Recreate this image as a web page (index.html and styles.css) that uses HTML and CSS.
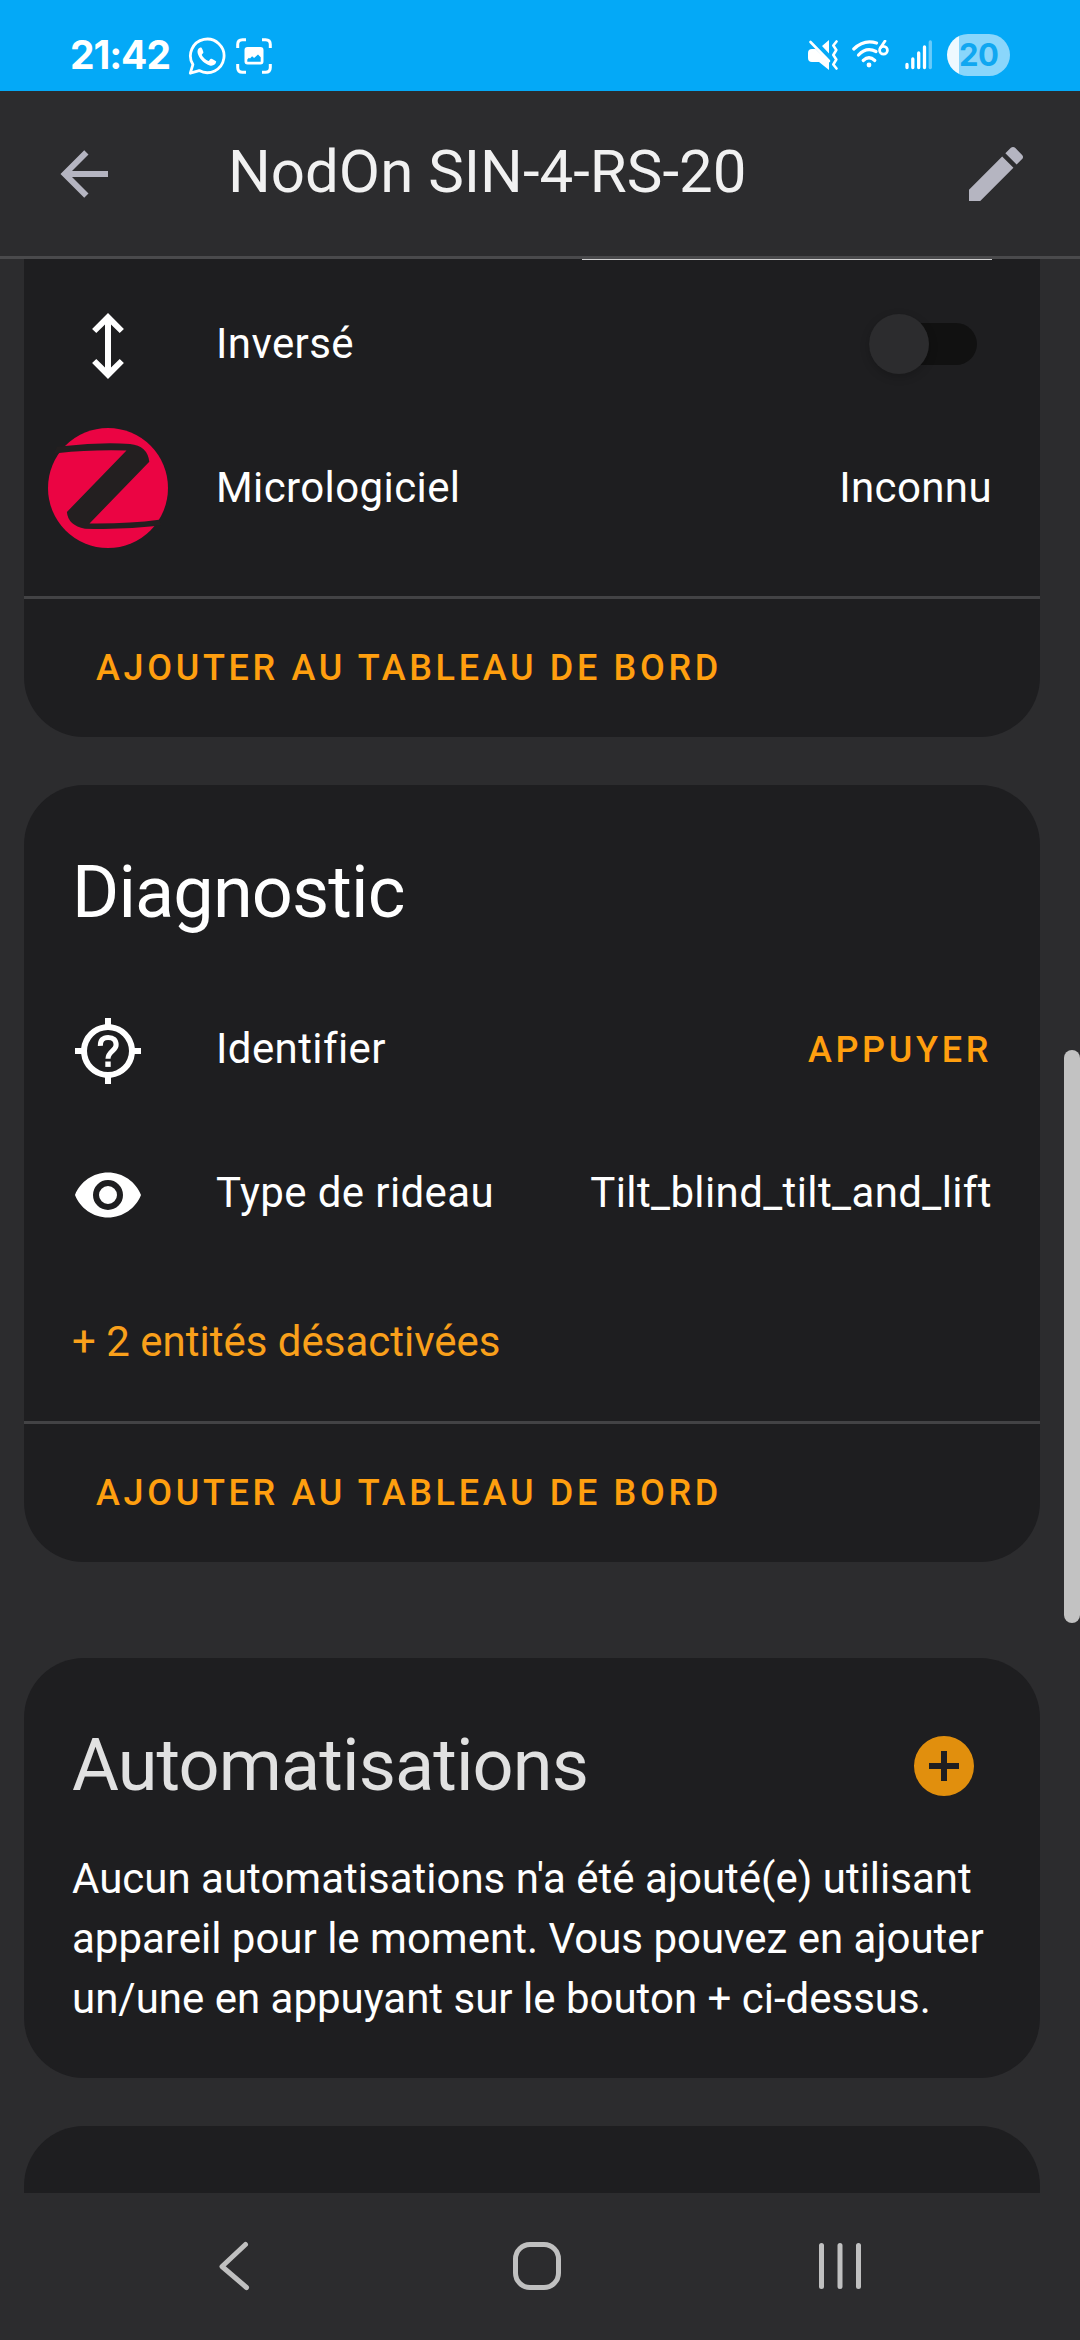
FILE: index.html
```html
<!DOCTYPE html>
<html lang="fr">
<head>
<meta charset="utf-8">
<title>NodOn SIN-4-RS-20</title>
<link rel="stylesheet" href="styles.css">
</head>
<body>
<div class="status">
  <span class="clock">21:42</span>
  <svg class="st-whatsapp" width="38" height="38" viewBox="0 0 38 38"><path d="M2.3 36.2 4.9 27.6A16.8 16.8 0 1 1 11.2 33.6Z" fill="none" stroke="#fff" stroke-width="2.8" stroke-linejoin="round"/><path d="M12.2 10.6c-2.6 1-3.4 4-2 7.200 2.200 5.200 6.500 9.100 11.600 10.700 3 .9 6.200-1 6.400-3.900.1-.8-4.600-3.100-5.400-2.900-.9.3-1.600 2.300-2.400 2.200-2.700-.7-5.500-3.300-6.600-5.800-.2-.7 1.500-1.600 1.600-2.500.1-.8-1.500-4.700-2.200-5-.3-.1-.6-.1-1 0z" fill="#fff"/></svg>
  <svg class="st-shot" width="36" height="36" viewBox="0 0 36 36"><path d="M1.700 10V6.500Q1.700 1.700 6.500 1.700H10M26 1.700h3.500Q34.300 1.700 34.300 6.500V10M34.300 26v3.500Q34.300 34.300 29.500 34.300H26M10 34.300H6.500Q1.700 34.300 1.700 29.500V26" fill="none" stroke="#fff" stroke-width="3"/><path fill-rule="evenodd" d="M11.500 9h13Q27.500 9 27.500 12v11.500q0 3-3 3h-13q-3 0-3-3V12q0-3 3-3zM11.300 23.800h13.400v-4.500l-2.700-2.800-3.900 3.500-2-1.700-2.100 2.300-1.100-.8-1.600 1.700z" fill="#fff"/></svg>
  <div class="status-right">
    <svg width="30" height="30" viewBox="0 0 30 30"><path d="M0 13q0-4 4-4h3.500L21 22v8l-10-8H4q-4 0-4-4zM21 0v13.500l-7-7.500z" fill="#fff"/><path d="M2.500 2 21 21" stroke="#fff" stroke-width="2.600" stroke-linecap="round"/><path d="M28.500 1.500 25.300 5.500 28.300 10 25.300 15 28.300 19.500 25.300 24.500 28.500 28.500" fill="none" stroke="#fff" stroke-width="2.600" stroke-linecap="round" stroke-linejoin="round"/></svg>
    <svg class="st-wifi" width="38" height="30" viewBox="0 0 38 30"><g fill="none" stroke="#fff" stroke-width="3.200" stroke-linecap="round"><path d="M1.800 9Q12 -1 24.500 3"/><path d="M6.500 15Q14.500 6.500 24 11.500"/><path d="M11.200 20.500q5.800-5.500 11.600 0"/></g><circle cx="17" cy="25" r="2.400" fill="#fff"/><circle cx="31.500" cy="10.300" r="3.900" fill="none" stroke="#fff" stroke-width="2.800"/><path d="M28.300 8 33 1" stroke="#fff" stroke-width="2.800" stroke-linecap="round"/></svg>
    <svg class="st-signal" width="28" height="30" viewBox="0 0 28 30"><g stroke="#fff" stroke-width="3.300" stroke-linecap="round"><path d="M2 24.500V27.600M7.800 19V27.600M13.700 13V27.600M19.500 7V27.600"/><path d="M25.300 2V27.600" opacity=".4"/></g></svg>
    <span class="battery">20</span>
  </div>
</div>

<header class="toolbar">
  <svg class="icon" viewBox="0 0 24 24"><path d="M20 11v2H8l5.500 5.500-1.420 1.420L4.160 12l7.920-7.920L13.500 5.500 8 11z"/></svg>
  <h1>NodOn SIN-4-RS-20</h1>
  <svg class="icon" viewBox="0 0 24 24"><path d="M20.710 7.040c.39-.39.39-1.040 0-1.410l-2.340-2.340c-.37-.39-1.020-.39-1.410 0l-1.840 1.830 3.750 3.750M3 17.250V21h3.750L17.810 9.930l-3.750-3.750z"/></svg>
</header>

<main class="content">
  <section class="card first">
    <div class="select-line"></div>
    <div class="rows">
      <div class="row">
        <span class="badge"><svg class="icon" viewBox="0 0 24 24"><path d="M12 1 17.300 6.300 15.900 7.700 13 4.830V19.170L15.900 16.300 17.300 17.700 12 23 6.700 17.700 8.100 16.300 11 19.170V4.830L8.100 7.700 6.700 6.300z"/></svg></span>
        <span class="name">Inversé</span>
        <span class="switch"><span class="knob"></span></span>
      </div>
      <div class="row">
        <svg class="zigbee" viewBox="0 0 120 120"><circle cx="60" cy="60" r="60" fill="#eb0443"/><path class="zig" d="M9 18.800 17 18Q50 14.200 82 15.900Q99.500 17.500 101.300 33.700L41.500 95.500Q80 96 111 91.800L113 97 105 98.300Q70 102.200 37 100.700Q20 97.500 18.900 84L78.500 22.400Q40 21.500 11 25L6 25.600z"/></svg>
        <span class="name">Micrologiciel</span>
        <span class="value">Inconnu</span>
      </div>
    </div>
    <div class="actions"><a>AJOUTER AU TABLEAU DE BORD</a></div>
  </section>

  <section class="card diagnostic">
    <h2>Diagnostic</h2>
    <div class="rows">
      <div class="row">
        <span class="badge"><svg class="icon" viewBox="0 0 24 24"><path d="M11 1h2v2.060A9 9 0 0 1 20.940 11H23v2h-2.060A9 9 0 0 1 13 20.940V23h-2v-2.060A9 9 0 0 1 3.060 13H1v-2h2.060A9 9 0 0 1 11 3.060zM12 5a7 7 0 1 0 0 14 7 7 0 0 0 0-14z" fill-rule="evenodd"/><path d="M9.450 10.300Q9.400 7.500 12.050 7.500T14.700 10C14.700 11.900 12 12.100 12 14.600" fill="none" stroke="#fff" stroke-width="1.700"/><path d="M11.100 15.500h1.800v1.800h-1.800z"/></svg></span>
        <span class="name">Identifier</span>
        <a class="press">APPUYER</a>
      </div>
      <div class="row">
        <span class="badge"><svg class="icon" viewBox="0 0 24 24"><path d="M12 9a3 3 0 0 0-3 3 3 3 0 0 0 3 3 3 3 0 0 0 3-3 3 3 0 0 0-3-3m0 8a5 5 0 0 1-5-5 5 5 0 0 1 5-5 5 5 0 0 1 5 5 5 5 0 0 1-5 5m0-12.500C7 4.500 2.730 7.610 1 12c1.730 4.390 6 7.500 11 7.500s9.270-3.110 11-7.500c-1.730-4.390-6-7.500-11-7.500z"/></svg></span>
        <span class="name">Type de rideau</span>
        <span class="value">Tilt_blind_tilt_and_lift</span>
      </div>
    </div>
    <a class="more">+ 2 entités désactivées</a>
    <div class="actions"><a>AJOUTER AU TABLEAU DE BORD</a></div>
  </section>

  <section class="card automations">
    <div class="heading">
      <h2>Automatisations</h2>
      <svg class="icon add" viewBox="0 0 24 24"><path d="M17 13h-4v4h-2v-4H7v-2h4V7h2v4h4m-5-9A10 10 0 0 0 2 12a10 10 0 0 0 10 10 10 10 0 0 0 10-10A10 10 0 0 0 12 2z"/></svg>
    </div>
    <p>Aucun automatisations n'a été ajouté(e) utilisant appareil pour le moment. Vous pouvez en ajouter un/une en appuyant sur le bouton + ci-dessus.</p>
  </section>

  <section class="card next"></section>
</main>

<nav class="navbar">
  <svg width="32" height="50" viewBox="0 0 32 50"><path d="M27.500 3.500 4 25.500 28.500 46.500" /></svg>
  <svg width="50" height="50" viewBox="0 0 50 50"><rect x="3.500" y="3.500" width="43" height="43" rx="14.500"/></svg>
  <svg width="44" height="50" viewBox="0 0 44 50"><path d="M3.500 4.500V45.500M22 4.500V45.500M40.500 4.500V45.500"/></svg>
</nav>
<div class="scrollbar"></div>
</body>
</html>
```
FILE: styles.css
```css
* { box-sizing: border-box; }

body {
  margin: 0;
  width: 1080px;
  height: 2340px;
  display: flex;
  flex-direction: column;
  overflow: hidden;
  position: relative;
  background: #2c2c2e;
  color: #fff;
  font: 42px/60px Roboto, "Noto Sans", sans-serif;
}

h1, h2, p { margin: 0; font-weight: 400; }
svg { display: block; flex: none; }
.icon { width: 72px; height: 72px; fill: currentColor; }

.status {
  height: 91px;
  flex: none;
  display: flex;
  align-items: flex-start;
  padding: 34px 70px 0 70px;
  background: #04a9f7;
}
.clock {
  width: 118px;
  font: 700 39px/42px Inter, sans-serif;
  letter-spacing: -1.1px;
}
.st-whatsapp { margin-top: 3px; }
.st-shot { margin: 4px 0 0 10px; }
.status-right { margin-left: auto; display: flex; }
.status-right svg { margin-top: 6px; }
.status-right .st-wifi { margin-left: 14px; }
.status-right .st-signal { margin-left: 15px; }
.battery {
  width: 63px;
  height: 42px;
  margin-left: 14px;
  border-radius: 21px;
  background: linear-gradient(90deg, #eef9ff 12px, #8ad6fb 12px);
  color: #10a7f1;
  font: 700 31px/41px Inter, sans-serif;
  letter-spacing: -0.6px;
  padding-left: 12px;
}

.toolbar {
  height: 168px;
  flex: none;
  display: flex;
  align-items: center;
  padding: 0 48px;
  border-bottom: 3px solid #4a4a4c;
  color: #b5b5c1;
}
.toolbar h1 {
  margin-left: 108px;
  flex: 1;
  padding-bottom: 4px;
  font-size: 60px;
  line-height: 72px;
  color: #f1f1f1;
}

.content {
  flex: 1;
  min-height: 0;
  overflow: hidden;
  padding: 0 40px 0 24px;
}
.card {
  border-radius: 60px;
  background: #1e1e20;
  overflow: hidden;
}
.card.first { border-radius: 0 0 60px 60px; }
.select-line { height: 1px; width: 410px; margin: 0 48px 24px auto; background: #d0d0d0; }
.rows { display: flex; flex-direction: column; gap: 24px; padding: 0 48px 0 24px; }
.row { height: 120px; display: flex; align-items: center; letter-spacing: .009375em; }
.badge { width: 120px; display: flex; justify-content: center; padding-top: 4px; }
.name { margin-left: 48px; flex: 1; }
.zigbee { width: 120px; height: 120px; }
.zig { fill: #231f20; }

.switch {
  width: 108px;
  height: 42px;
  margin-right: 15px;
  border-radius: 21px;
  background: #111;
  display: flex;
  align-items: center;
}
.knob {
  width: 60px;
  height: 60px;
  border-radius: 50%;
  background: #2c2c2e;
  box-shadow: 0 3px 10px rgba(0, 0, 0, .2);
}

.actions {
  height: 141px;
  border-top: 3px solid #434345;
  display: flex;
  align-items: center;
  padding: 0 72px;
}
.actions a, .press {
  color: #ff9f0f;
  font-weight: 500;
  font-size: 36px;
  letter-spacing: 3.67px;
}
.press { padding-top: 2px; }
.first .actions { margin-top: 48px; }

.diagnostic { margin-top: 48px; }
.card h2 {
  font-size: 72px;
  line-height: 144px;
  letter-spacing: -0.86px;
}
.diagnostic h2 { padding: 36px 48px 0; margin-bottom: 24px; }
.more { display: block; margin: 59px 48px 49px; color: #f9a01b; }

.automations { margin-top: 96px; height: 420px; padding: 36px 48px 0; }
.heading {
  display: flex;
  justify-content: space-between;
  align-items: center;
  padding-right: 12px;
  color: #e1e1e1;
}
.add { color: #e18f0d; }
.automations p { margin-top: 11px; }
.next { margin-top: 48px; height: 200px; }

.navbar {
  height: 147px;
  flex: none;
  display: flex;
  align-items: flex-start;
  padding: 48px 218px 0 218px;
}
.navbar svg { fill: none; stroke: #c0c0c0; stroke-width: 5; stroke-linecap: round; stroke-linejoin: round; }
.navbar svg:nth-child(2) { margin: 0 auto 0 262px; }

/* Overlay scroll indicator */
.scrollbar {
  position: absolute;
  right: 0;
  top: 1050px;
  width: 16px;
  height: 573px;
  border-radius: 8px;
  background: #c2c2c2;
}
```
